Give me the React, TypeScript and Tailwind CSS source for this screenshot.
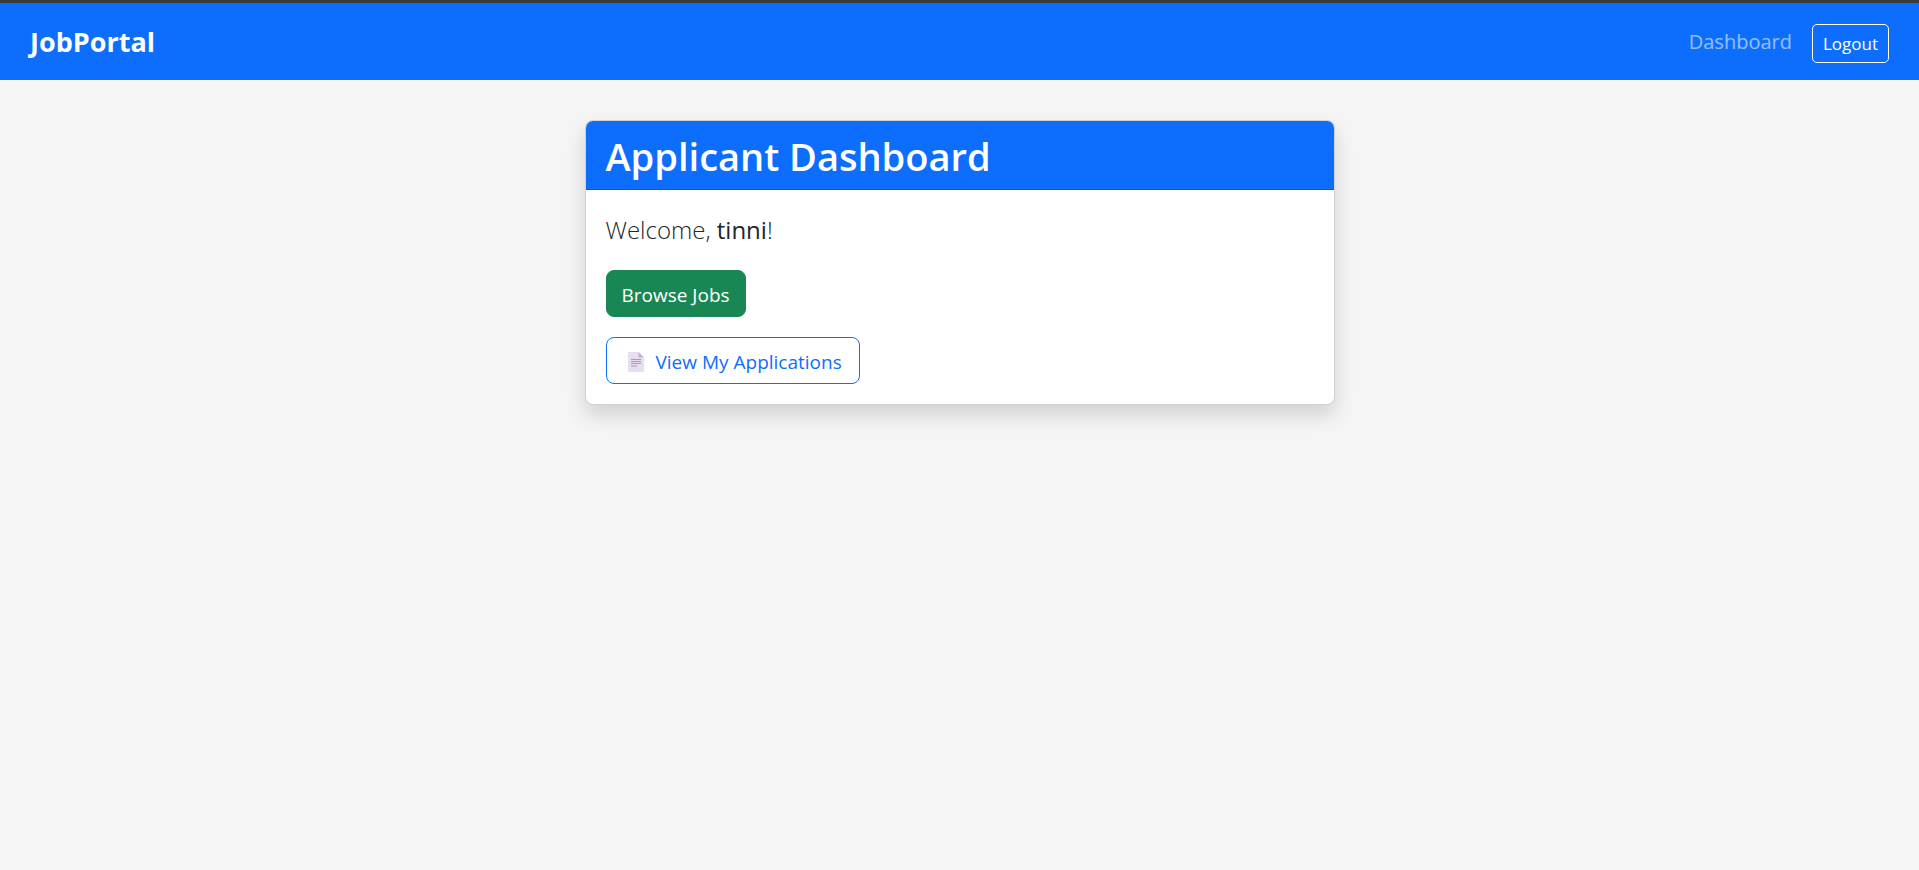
import React from "react";

function PageIcon() {
  return (
    <svg
      width="16"
      height="20"
      viewBox="0 0 16 20"
      aria-hidden="true"
      className="shrink-0"
    >
      <path d="M0 0H10.5L16 5.5V20H0Z" fill="#e7dff1" />
      <path d="M10.5 0L16 5.5H10.5Z" fill="#bdb5c6" />
      <path
        d="M3 7.5H13M3 9.5H13M3 11.5H13M3 14H9"
        stroke="#a79fb1"
        strokeWidth="1"
      />
    </svg>
  );
}

function Navbar() {
  return (
    <nav className="flex items-start justify-between border-t-3 border-[#3c3c3c] bg-[#0d6efd] px-[30px] pt-[21px] pb-[17px] text-white">
      <a href="#" className="text-[27px] leading-[36px] font-bold">
        JobPortal
      </a>
      <div className="flex items-start gap-5">
        <a href="#" className="text-xl leading-[36px] text-white/55">
          Dashboard
        </a>
        <button
          type="button"
          className="rounded-[5px] border border-white px-[10px] py-[5px] text-[17px] leading-[27px]"
        >
          Logout
        </button>
      </div>
    </nav>
  );
}

export default function App() {
  return (
    <div className="min-h-screen bg-[#f5f5f5] font-['Open_Sans','Noto_Sans',sans-serif] text-[#212529]">
      <Navbar />
      <main className="px-5 pt-10">
        <section className="mx-auto max-w-[750px] overflow-hidden rounded-lg border border-black/[0.175] bg-white shadow-[0_10px_20px_rgba(0,0,0,0.15)]">
          <header className="border-b border-black/[0.175] bg-[#0d6efd] px-5 pt-[11px] pb-[9px] text-white">
            <h1 className="text-[38px] leading-[48px] font-semibold">
              Applicant Dashboard
            </h1>
          </header>
          <div className="flex flex-col items-start gap-5 p-5">
            <p className="text-2xl leading-10 font-light">
              Welcome, <strong className="font-medium">tinni</strong>!
            </p>
            <a
              href="#"
              className="rounded-lg border border-[#198754] bg-[#198754] px-[15px] pt-[9px] pb-[6px] text-[19px] leading-[30px] text-white"
            >
              Browse Jobs
            </a>
            <a
              href="#"
              className="flex items-center gap-3 rounded-lg border border-[#0d6efd] pt-[9px] pr-[17px] pb-[6px] pl-[21px] text-[19px] leading-[30px] text-[#0d6efd]"
            >
              <PageIcon />
              View My Applications
            </a>
          </div>
        </section>
      </main>
    </div>
  );
}
